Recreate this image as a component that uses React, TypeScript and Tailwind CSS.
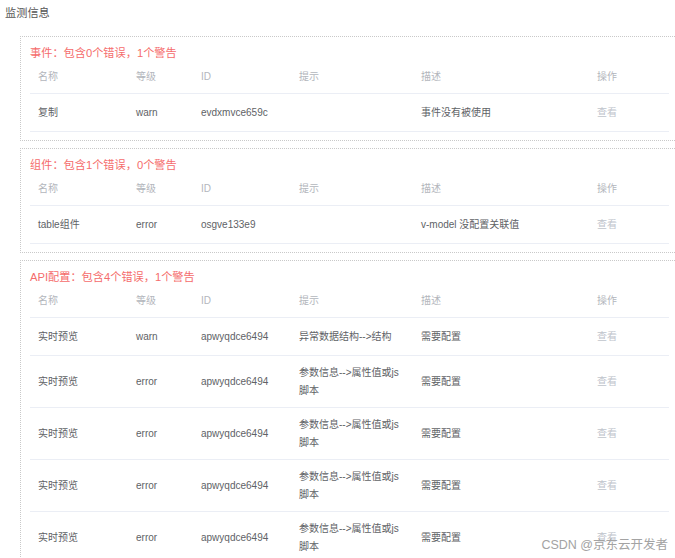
import React from "react";

interface RowI {
    name: string;
    level: string;
    id: string;
    hint: string;
    desc: string;
    tall?: boolean;
}

interface SectionI {
    title: string;
    rows: RowI[];
}

const sections: SectionI[] = [
    {
        title: "事件：包含0个错误，1个警告",
        rows: [{ name: "复制", level: "warn", id: "evdxmvce659c", hint: "", desc: "事件没有被使用" }],
    },
    {
        title: "组件：包含1个错误，0个警告",
        rows: [{ name: "table组件", level: "error", id: "osgve133e9", hint: "", desc: "v-model 没配置关联值" }],
    },
    {
        title: "API配置：包含4个错误，1个警告",
        rows: [
            { name: "实时预览", level: "warn", id: "apwyqdce6494", hint: "异常数据结构-->结构", desc: "需要配置" },
            { name: "实时预览", level: "error", id: "apwyqdce6494", hint: "参数信息-->属性值或js脚本", desc: "需要配置", tall: true },
            { name: "实时预览", level: "error", id: "apwyqdce6494", hint: "参数信息-->属性值或js脚本", desc: "需要配置", tall: true },
            { name: "实时预览", level: "error", id: "apwyqdce6494", hint: "参数信息-->属性值或js脚本", desc: "需要配置", tall: true },
            { name: "实时预览", level: "error", id: "apwyqdce6494", hint: "参数信息-->属性值或js脚本", desc: "需要配置", tall: true },
        ],
    },
];

const cols = "grid grid-cols-[98px_65px_98px_122px_176px_80px]";
const headers = ["名称", "等级", "ID", "提示", "描述", "操作"];

const SectionBox: React.FC<{ section: SectionI; first: boolean }> = ({ section, first }) => {
    return (
        <div className={`${first ? "mt-[15px]" : "mt-[7px]"} ml-[20px] w-[659px] border border-dotted border-[#c9c9c9] px-[9px] pt-[8px] pb-[8px]`}>
            <div className="text-[11.2px] leading-[16px] text-[#f56c6c]">{section.title}</div>

            <div className={`${cols} h-[33px] border-b border-[#ebeef5] items-center text-[#b3b6bc]`}>
                {headers.map((h) => (
                    <div key={h} className="px-[8px]">{h}</div>
                ))}
            </div>

            {section.rows.map((r, i) => (
                <div key={i} className={`${cols} ${r.tall ? "h-[52px]" : "h-[38px]"} border-b border-[#ebeef5] items-center text-[#606266]`}>
                    <div className="px-[8px]">{r.name}</div>
                    <div className="px-[8px]">{r.level}</div>
                    <div className="px-[8px]">{r.id}</div>
                    <div className="px-[8px] leading-[18px]">
                        <div className="w-[104px]">{r.hint}</div>
                    </div>
                    <div className="px-[8px]">{r.desc}</div>
                    <div className="px-[8px] text-[#c0c4cc]">查看</div>
                </div>
            ))}
        </div>
    );
};

const App: React.FC = () => {
    return (
        <div
            className="relative w-[675px] h-[558px] overflow-hidden bg-white text-[10px] leading-[18px]"
            style={{ fontFamily: '"Liberation Sans", "Noto Sans CJK SC", sans-serif' }}
        >
            <div className="pl-[5px] pt-[5px] text-[11.2px] leading-[16px] text-[#555]">监测信息</div>

            {sections.map((s, i) => (
                <SectionBox key={i} section={s} first={i === 0} />
            ))}

            {/* watermark */}
            <div className="absolute right-[7px] bottom-[4px] text-[12.5px] leading-[18px] text-[#a3a3a3] [text-shadow:0_0_2px_#fff]">
                CSDN @京东云开发者
            </div>
        </div>
    );
};

export default App;
